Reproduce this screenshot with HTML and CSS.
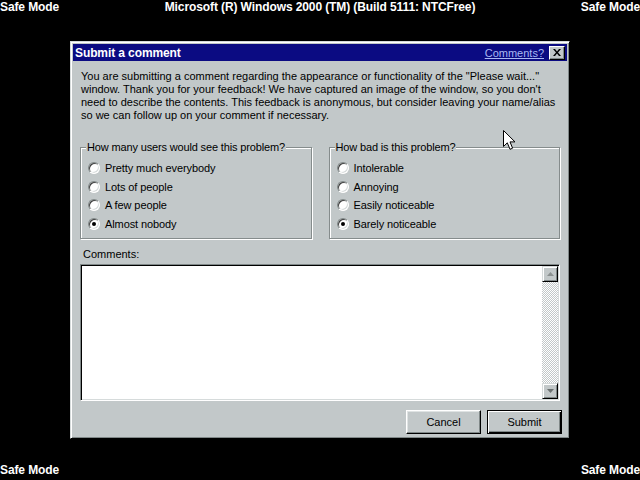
FILE: index.html
```html
<!DOCTYPE html>
<html>
<head>
    <meta charset="UTF-8">
    <title>Submit a comment</title>
    <link rel="stylesheet" href="styles.css">
</head>
<body>
    <div class="screen">
        <div class="status-row">
            <span>Safe Mode</span>
            <span>Microsoft (R) Windows 2000 (TM) (Build 5111: NTCFree)</span>
            <span>Safe Mode</span>
        </div>

        <div class="desktop">
            <div class="dialog">
                <div class="titlebar">
                    <span class="title">Submit a comment</span>
                    <a class="title-link">Comments?</a>
                    <button class="close-btn">
                        <svg width="8" height="7" viewBox="0 0 8 7"><path d="M0 0h2l2 2.5L6 0h2L5 3.5 8 7H6L4 4.5 2 7H0l3-3.5z" fill="#000"/></svg>
                    </button>
                </div>

                <div class="dialog-body">
                    <p class="intro">You are submitting a comment regarding the appearance or functionality of the "Please wait..."<br>window. Thank you for your feedback! We have captured an image of the window, so you don't<br>need to describe the contents. This feedback is anonymous, but consider leaving your name/alias<br>so we can follow up on your comment if necessary.</p>

                    <div class="groups">
                        <fieldset class="group">
                            <legend>How many users would see this problem?</legend>
                            <label class="option"><span class="radio"></span>Pretty much everybody</label>
                            <label class="option"><span class="radio"></span>Lots of people</label>
                            <label class="option"><span class="radio"></span>A few people</label>
                            <label class="option"><span class="radio checked"></span>Almost nobody</label>
                        </fieldset>
                        <fieldset class="group">
                            <legend>How bad is this problem?</legend>
                            <label class="option"><span class="radio"></span>Intolerable</label>
                            <label class="option"><span class="radio"></span>Annoying</label>
                            <label class="option"><span class="radio"></span>Easily noticeable</label>
                            <label class="option"><span class="radio checked"></span>Barely noticeable</label>
                        </fieldset>
                    </div>

                    <div class="comments-label">Comments:</div>
                    <div class="comments-box">
                        <div class="comments-area"></div>
                        <div class="scrollbar">
                            <div class="scroll-btn">
                                <svg width="7" height="4" viewBox="0 0 7 4"><path d="M3.5 0L7 4H0z" fill="#8a9090"/></svg>
                            </div>
                            <div class="scroll-track"></div>
                            <div class="scroll-btn">
                                <svg width="7" height="4" viewBox="0 0 7 4"><path d="M0 0h7L3.5 4z" fill="#6a7070"/></svg>
                            </div>
                        </div>
                    </div>

                    <div class="actions">
                        <button class="push-btn">Cancel</button>
                        <button class="push-btn default-btn">Submit</button>
                    </div>
                </div>
            </div>
        </div>

        <div class="status-row bottom">
            <span>Safe Mode</span>
            <span>Safe Mode</span>
        </div>

        <svg class="cursor" width="13" height="21" viewBox="0 0 13 21"><path d="M0.5 0.5V16.5L4.3 12.8L7 19.3L9.6 18.2L7 11.9H12z" fill="#fff" stroke="#000" stroke-linejoin="round"/></svg>
    </div>
</body>
</html>
```

FILE: styles.css
```css
body {
    margin: 0;
    padding: 0;
    background-color: #000;
    font-family: 'Liberation Sans', Arial, sans-serif;
    overflow: hidden;
}
.screen {
    position: relative;
    width: 640px;
    height: 480px;
    display: flex;
    flex-direction: column;
}
.status-row {
    height: 20px;
    display: flex;
    justify-content: space-between;
    align-items: flex-start;
    color: #fff;
    font-weight: bold;
    font-size: 12px;
    line-height: 14px;
    letter-spacing: -0.1px;
}
.status-row.bottom {
    align-items: flex-end;
    padding-bottom: 3px;
    box-sizing: border-box;
}
.desktop {
    flex: 1;
    display: flex;
    align-items: center;
    justify-content: center;
}
.dialog {
    width: 500px;
    height: 398px;
    box-sizing: border-box;
    background-color: #c2c8c9;
    border: 1px solid;
    border-color: #d6dbdb #000 #000 #d6dbdb;
    box-shadow: inset 1px 1px #fff, inset -1px -1px #808888;
    padding: 2px;
    display: flex;
    flex-direction: column;
    font-size: 11px;
    color: #000;
}
.titlebar {
    height: 17px;
    background-color: #0b0b82;
    display: flex;
    align-items: center;
    padding: 0 2px 0 2px;
}
.title {
    flex: 1;
    color: #fff;
    font-weight: bold;
    font-size: 12px;
    letter-spacing: -0.1px;
}
.title-link {
    color: #a9b8f2;
    text-decoration: underline;
    font-size: 11px;
    margin-right: 5px;
}
.close-btn {
    width: 16px;
    height: 14px;
    padding: 0;
    background-color: #c2c8c9;
    border: 1px solid;
    border-color: #fff #000 #000 #fff;
    box-shadow: inset -1px -1px #808888;
    display: flex;
    align-items: center;
    justify-content: center;
}
.dialog-body {
    padding: 0 7px;
}
.intro {
    margin: 9px 0 0;
    padding-left: 1px;
    line-height: 13px;
    white-space: nowrap;
}
.groups {
    margin-top: 19px;
    display: grid;
    grid-template-columns: 1fr 1fr;
    gap: 17px;
}
.group {
    margin: 0;
    padding: 5px 5px 5px 7px;
    border: 1px solid #858c8c;
    box-shadow: inset 1px 1px #fff, 1px 1px #fff;
    min-width: 0;
}
.group legend {
    padding: 0 1px;
    margin-left: -2px;
    line-height: 13px;
    background-color: #c2c8c9;
    letter-spacing: -0.15px;
}
.option {
    display: flex;
    align-items: center;
    height: 18.5px;
    letter-spacing: -0.1px;
}
.radio {
    width: 12px;
    height: 12px;
    box-sizing: border-box;
    border-radius: 50%;
    border: 1px solid;
    border-color: #808888 #fff #fff #808888;
    background-color: #fff;
    box-shadow: inset 1px 1px #404040, inset -1px -1px #d6dbdb;
    margin-right: 5px;
    display: flex;
    align-items: center;
    justify-content: center;
}
.radio.checked::after {
    content: '';
    width: 4px;
    height: 4px;
    border-radius: 50%;
    background-color: #000;
}
.comments-label {
    margin-top: 9px;
    padding-left: 3px;
    line-height: 13px;
}
.comments-box {
    margin-top: 3px;
    height: 137px;
    box-sizing: border-box;
    border: 1px solid;
    border-color: #808888 #fff #fff #808888;
    box-shadow: inset 1px 1px #000, inset -1px -1px #d6dbdb;
    padding: 1px;
    display: flex;
}
.comments-area {
    flex: 1;
    background-color: #fff;
}
.scrollbar {
    width: 16px;
    display: flex;
    flex-direction: column;
}
.scroll-btn {
    height: 16px;
    box-sizing: border-box;
    background-color: #c2c8c9;
    border: 1px solid;
    border-color: #d6dbdb #000 #000 #d6dbdb;
    box-shadow: inset 1px 1px #fff, inset -1px -1px #808888;
    display: flex;
    align-items: center;
    justify-content: center;
}
.scroll-track {
    flex: 1;
    background-color: #fff;
    background-image: repeating-conic-gradient(#c2c8c9 0 25%, #fff 0 50%);
    background-size: 2px 2px;
}
.actions {
    margin-top: 9px;
    margin-right: -2px;
    display: flex;
    justify-content: flex-end;
    gap: 6px;
}
.push-btn {
    width: 75px;
    height: 24px;
    padding: 0;
    font-family: 'Liberation Sans', Arial, sans-serif;
    font-size: 11px;
    color: #000;
    background-color: #c2c8c9;
    border: 1px solid;
    border-color: #fff #000 #000 #fff;
    box-shadow: inset -1px -1px #808888, inset 1px 1px #dfe3e3;
}
.default-btn {
    border: 1px solid #000;
    box-shadow: inset 1px 1px #fff, inset -1px -1px #000, inset -2px -2px #808888;
}
.cursor {
    position: absolute;
    left: 503px;
    top: 130px;
}
```
